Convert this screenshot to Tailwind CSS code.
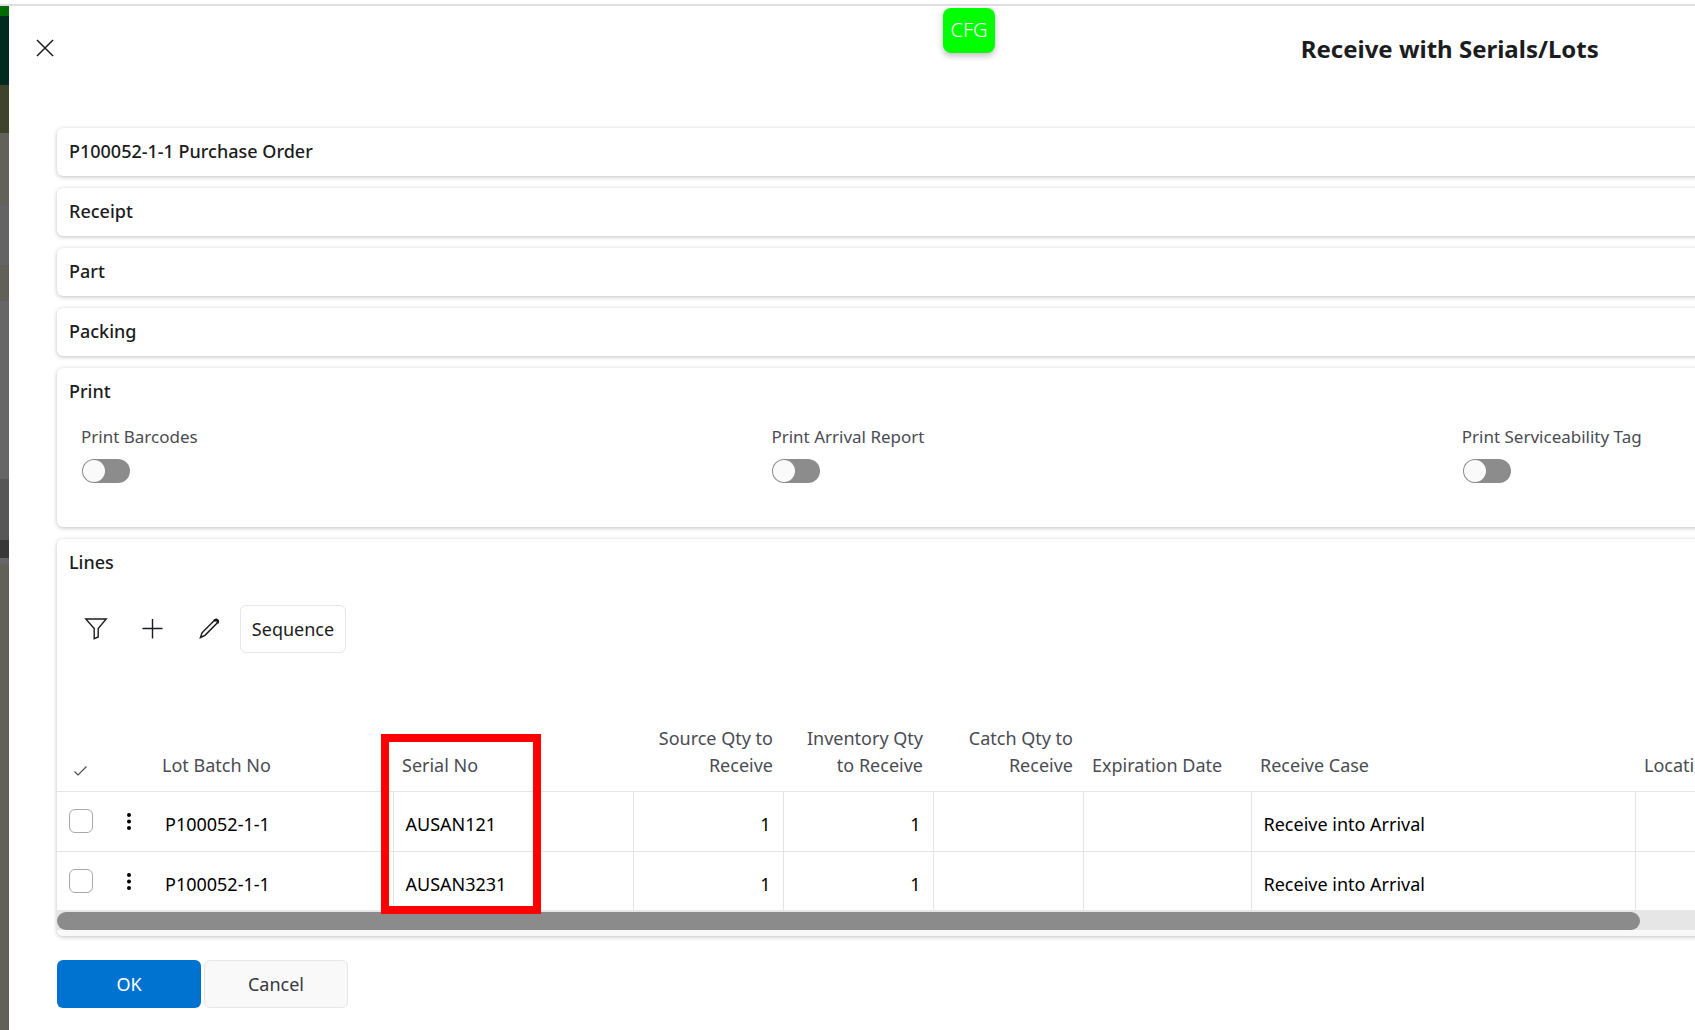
<!DOCTYPE html>
<html lang="en">

<head>
    <meta charset="UTF-8" />
    <meta name="viewport" content="width=device-width, initial-scale=1.0" />
    <title>Receive with Serials/Lots</title>
    <script src="https://cdn.jsdelivr.net/npm/@tailwindcss/browser@4"></script>
</head>

<body class="bg-white font-['Noto_Sans','Open_Sans',sans-serif] text-lg text-[#1b1c20] overflow-hidden">
    <div class="flex flex-col min-h-screen pt-1">
        <div class="border-t-2 border-[#dedede]"></div>
        <div class="flex grow overflow-hidden">

            <!-- Dimmed page behind the dialog -->
            <div class="w-[9px] shrink-0 flex flex-col">
                <div class="h-[10px] bg-[#006b00]"></div>
                <div class="h-[69px] bg-[#002b1e]"></div>
                <div class="h-12 bg-[#40432c]"></div>
                <div class="h-[72px] bg-[#62625b]"></div>
                <div class="h-[60px] bg-[#646464]"></div>
                <div class="h-9 bg-[#61615a]"></div>
                <div class="h-[178px] bg-[#666666]"></div>
                <div class="h-[61px] bg-[#575757]"></div>
                <div class="h-[18px] bg-[#383838]"></div>
                <div class="h-[6px] bg-[#666666]"></div>
                <div class="grow bg-[#61615a]"></div>
            </div>

            <!-- Dialog, wider than the window -->
            <main class="w-[170%] shrink-0 px-12">
                <header class="relative h-[122px] pt-[27px]">
                    <button type="button" aria-label="Close" class="absolute left-[-24px] top-[30px] size-6">
                        <svg viewBox="0 0 24 24" class="size-6" fill="none" stroke="#1b1c20" stroke-width="1.5">
                            <path d="M4 4l16 16M20 4L4 20" />
                        </svg>
                    </button>
                    <h1 class="text-2xl font-bold text-center">Receive with Serials/Lots</h1>
                </header>

                <div class="flex flex-col gap-3">
                    <section class="h-12 px-3 pb-0.5 flex items-center rounded-md shadow-[0_1px_4px_rgba(0,0,0,0.25)]">
                        <h2 class="font-medium">P100052-1-1 Purchase Order</h2>
                    </section>
                    <section class="h-12 px-3 pb-0.5 flex items-center rounded-md shadow-[0_1px_4px_rgba(0,0,0,0.25)]">
                        <h2 class="font-medium">Receipt</h2>
                    </section>
                    <section class="h-12 px-3 pb-0.5 flex items-center rounded-md shadow-[0_1px_4px_rgba(0,0,0,0.25)]">
                        <h2 class="font-medium">Part</h2>
                    </section>
                    <section class="h-12 px-3 pb-0.5 flex items-center rounded-md shadow-[0_1px_4px_rgba(0,0,0,0.25)]">
                        <h2 class="font-medium">Packing</h2>
                    </section>

                    <section class="rounded-md pb-11 shadow-[0_1px_4px_rgba(0,0,0,0.25)]">
                        <h2 class="h-12 px-3 pb-0.5 flex items-center font-medium">Print</h2>
                        <div class="grid grid-cols-4 pl-6 pt-[7px] text-[17px] text-[#4a4c53]">
                            <div>
                                <label for="barcodes" class="block leading-7">Print Barcodes</label>
                                <input type="checkbox" role="switch" id="barcodes"
                                    class="block mt-2 ml-px appearance-none w-12 h-6 rounded-full bg-[#8c8c8c] p-px before:block before:size-[22px] before:rounded-full before:bg-[#fafafa] checked:before:ml-6" />
                            </div>
                            <div>
                                <label for="arrival" class="block leading-7">Print Arrival Report</label>
                                <input type="checkbox" role="switch" id="arrival"
                                    class="block mt-2 ml-px appearance-none w-12 h-6 rounded-full bg-[#8c8c8c] p-px before:block before:size-[22px] before:rounded-full before:bg-[#fafafa] checked:before:ml-6" />
                            </div>
                            <div>
                                <label for="serviceability" class="block leading-7">Print Serviceability Tag</label>
                                <input type="checkbox" role="switch" id="serviceability"
                                    class="block mt-2 ml-px appearance-none w-12 h-6 rounded-full bg-[#8c8c8c] p-px before:block before:size-[22px] before:rounded-full before:bg-[#fafafa] checked:before:ml-6" />
                            </div>
                        </div>
                    </section>

                    <section class="rounded-md shadow-[0_1px_4px_rgba(0,0,0,0.25)]">
                        <h2 class="h-12 px-3 pb-0.5 flex items-center font-medium">Lines</h2>
                        <div class="flex items-center pl-[11px] pt-[18px]">
                            <button type="button" aria-label="Filter" class="w-14 h-12 flex items-center justify-center">
                                <svg viewBox="0 0 24 24" class="size-6" fill="none" stroke="#1b1c20" stroke-width="1.4">
                                    <path d="M1.800 2h20.400L14.200 11.500v8.500l-4 1.600V11.500z" />
                                </svg>
                            </button>
                            <button type="button" aria-label="Add" class="w-14 h-12 flex items-center justify-center">
                                <svg viewBox="0 0 24 24" class="size-6" fill="none" stroke="#1b1c20" stroke-width="1.400">
                                    <path d="M12.500 2v19.500M2.500 11.500h20" />
                                </svg>
                            </button>
                            <button type="button" aria-label="Edit" class="w-14 h-12 flex items-center justify-center">
                                <svg viewBox="0 0 24 24" class="size-6" fill="none" stroke="#1b1c20" stroke-width="1.500">
                                    <path d="M4.500 20.500l1.500-4.700L18.500 3.200q1.500-1.200 2.700-.2t.2 2.800L9 18.400z" />
                                    <path stroke-width="2.600" d="M18 4q2-1.800 3.200-.8t.2 2.900" />
                                </svg>
                            </button>
                            <button type="button"
                                class="h-12 w-[106px] ml-1 border border-[#e6e6e6] rounded-md">Sequence</button>
                        </div>

                        <table class="table-fixed w-full mt-[65px] text-left">
                            <colgroup>
                                <col class="w-12" />
                                <col class="w-12" />
                                <col class="w-60" />
                                <col class="w-60" />
                                <col class="w-[150px]" />
                                <col class="w-[150px]" />
                                <col class="w-[150px]" />
                                <col class="w-[168px]" />
                                <col class="w-96" />
                                <col />
                            </colgroup>
                            <thead class="text-[#4a4c53] align-bottom leading-[27px]">
                                <tr class="h-[73px] border-b border-[#e4e4e4]">
                                    <th class="pl-4 pb-3">
                                        <svg viewBox="0 0 16 16" class="size-4" fill="none" stroke="#4a4c53" stroke-width="1.200">
                                            <path d="M1.500 8.500l3.500 3.500L13.500 3.500" />
                                        </svg>
                                    </th>
                                    <th></th>
                                    <th class="font-normal px-[9px] pb-3">Lot Batch No</th>
                                    <th class="font-normal px-[9px] pb-3 relative">Serial No
                                        <!-- Callout round the serial numbers -->
                                        <div class="absolute left-[-12px] top-4 w-40 h-[180px] border-8 border-[#ff0000]"></div>
                                    </th>
                                    <th class="font-normal pl-2 pr-2.5 pb-3 text-right">Source Qty to Receive</th>
                                    <th class="font-normal pl-2 pr-2.5 pb-3 text-right">Inventory Qty to Receive</th>
                                    <th class="font-normal pl-2 pr-2.5 pb-3 text-right">Catch Qty to Receive</th>
                                    <th class="font-normal px-[9px] pb-3">Expiration Date</th>
                                    <th class="font-normal px-[9px] pb-3">Receive Case</th>
                                    <th class="font-normal px-[9px] pb-3">Location No</th>
                                </tr>
                            </thead>
                            <tbody class="text-black">
                                <tr class="h-[60px] border-b border-[#e4e4e4]">
                                    <td class="pl-3">
                                        <input type="checkbox" aria-label="Select AUSAN121"
                                            class="block appearance-none size-6 border border-[#a9a9a9] rounded-md" />
                                    </td>
                                    <td>
                                        <button type="button" aria-label="Row menu" class="flex w-[47px] h-6 items-center justify-center">
                                            <svg viewBox="0 0 24 24" class="size-6" fill="#000">
                                                <circle cx="12" cy="6" r="2" />
                                                <circle cx="12" cy="12.500" r="2" />
                                                <circle cx="12" cy="19" r="2" />
                                            </svg>
                                        </button>
                                    </td>
                                    <td class="px-3 pt-1.5 border-r border-[#e4e4e4]">P100052-1-1</td>
                                    <td class="px-3 pt-1.5 border-r border-[#e4e4e4]">AUSAN121</td>
                                    <td class="px-3 pt-1.5 border-r border-[#e4e4e4] text-right">1</td>
                                    <td class="px-3 pt-1.5 border-r border-[#e4e4e4] text-right">1</td>
                                    <td class="border-r border-[#e4e4e4]"></td>
                                    <td class="border-r border-[#e4e4e4]"></td>
                                    <td class="px-3 pt-1.5 border-r border-[#e4e4e4]">Receive into Arrival</td>
                                    <td></td>
                                </tr>
                                <tr class="h-[59px]">
                                    <td class="pl-3">
                                        <input type="checkbox" aria-label="Select AUSAN3231"
                                            class="block appearance-none size-6 border border-[#a9a9a9] rounded-md" />
                                    </td>
                                    <td>
                                        <button type="button" aria-label="Row menu" class="flex w-[47px] h-6 items-center justify-center">
                                            <svg viewBox="0 0 24 24" class="size-6" fill="#000">
                                                <circle cx="12" cy="6" r="2" />
                                                <circle cx="12" cy="12.500" r="2" />
                                                <circle cx="12" cy="19" r="2" />
                                            </svg>
                                        </button>
                                    </td>
                                    <td class="px-3 pt-1.5 border-r border-[#e4e4e4]">P100052-1-1</td>
                                    <td class="px-3 pt-1.5 border-r border-[#e4e4e4]">AUSAN3231</td>
                                    <td class="px-3 pt-1.5 border-r border-[#e4e4e4] text-right">1</td>
                                    <td class="px-3 pt-1.5 border-r border-[#e4e4e4] text-right">1</td>
                                    <td class="border-r border-[#e4e4e4]"></td>
                                    <td class="border-r border-[#e4e4e4]"></td>
                                    <td class="px-3 pt-1.5 border-r border-[#e4e4e4]">Receive into Arrival</td>
                                    <td></td>
                                </tr>
                            </tbody>
                        </table>
                        <!-- Horizontal scrollbar -->
                        <div class="bg-[#e6e6e6] pt-0.5">
                            <div class="h-[18px] rounded-full bg-[#8b8b8b]" style="width: 56.83%"></div>
                        </div>
                        <div class="h-1.5 bg-[#f8f8f8] rounded-b-md"></div>
                    </section>
                </div>

                <div class="flex gap-[3px] mt-6">
                    <button type="button" class="w-36 h-12 rounded-md bg-[#0073d1] text-white">OK</button>
                    <button type="button"
                        class="w-36 h-12 rounded-md bg-[#f9f9f9] border border-[#e6e6e6] text-[#35373d]">Cancel</button>
                </div>
            </main>
        </div>
    </div>

    <!-- Environment badge -->
    <div
        class="absolute left-[943px] top-2 w-[52px] h-[45px] pb-0.5 flex items-center justify-center rounded-lg bg-[#00ff00] text-white text-xl font-light shadow-[0_3px_6px_rgba(0,0,0,0.25)]">
        CFG</div>
</body>

</html>
